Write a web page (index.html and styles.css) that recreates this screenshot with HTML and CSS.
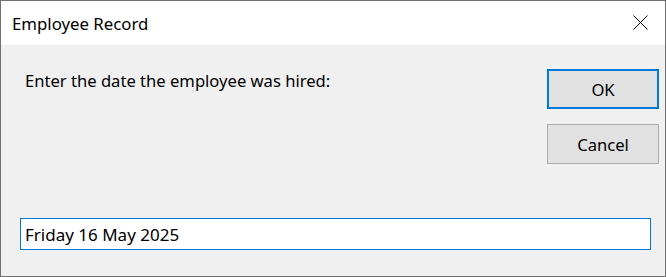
FILE: index.html
```html
<!DOCTYPE html>
<html>
<head>
    <title>Employee Record</title>
    <link rel="stylesheet" href="styles.css">
</head>
<body>
    <div class="window">
        <div class="titlebar">
            <span class="title">Employee Record</span>
            <svg class="close" width="15" height="15" viewBox="0 0 15 15">
                <path d="M0.5 0.5 L14.5 14.5 M14.5 0.5 L0.5 14.5" stroke="#000" stroke-width="1" fill="none"/>
            </svg>
        </div>
        <div class="dialog-body">
            <div class="top-row">
                <div class="prompt">Enter the date the employee was hired:</div>
                <div class="button-column">
                    <button class="dlg-button default">OK</button>
                    <button class="dlg-button">Cancel</button>
                </div>
            </div>
            <input class="entry" type="text" value="Friday 16 May 2025">
        </div>
    </div>
</body>
</html>
```

FILE: styles.css
```css
body {
    margin: 0;
    font-family: "Noto Sans", "Open Sans", sans-serif;
    font-size: 16.6px;
    color: #000;
}
.window {
    width: 666px;
    height: 277px;
    box-sizing: border-box;
    border: 1px solid #707070;
    display: flex;
    flex-direction: column;
}
.titlebar {
    height: 44px;
    background-color: #fff;
    display: flex;
    align-items: center;
    justify-content: space-between;
    padding: 0 17px 0 11px;
}
.title {
    font-size: 16.8px;
}
.close {
    display: block;
    margin-top: -1px;
}
.dialog-body {
    flex: 1;
    background-color: #f0f0f0;
    display: flex;
    flex-direction: column;
    padding: 24px 6px 26px 19px;
}
.top-row {
    display: flex;
    justify-content: space-between;
}
.prompt {
    padding-left: 5px;
    padding-top: 1px;
    line-height: 1.3;
}
.button-column {
    display: flex;
    flex-direction: column;
    gap: 15px;
}
.dlg-button {
    width: 112px;
    height: 40px;
    box-sizing: border-box;
    background-color: #e1e1e1;
    border: 1px solid #adadad;
    font-family: inherit;
    font-size: 16.6px;
    color: #000;
    padding: 0;
}
.dlg-button.default {
    border: 2px solid #0078d7;
}
.entry {
    margin-top: auto;
    width: 631px;
    height: 32px;
    box-sizing: border-box;
    border: 1px solid #0078d7;
    outline: none;
    background-color: #fff;
    font-family: inherit;
    font-size: 17px;
    padding: 0 4px;
    color: #000;
}
```
